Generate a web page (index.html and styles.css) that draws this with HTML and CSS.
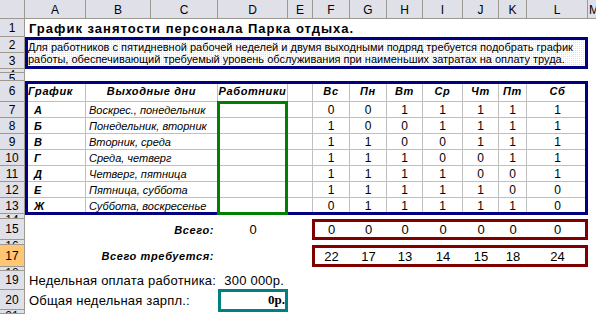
FILE: index.html
```html
<!DOCTYPE html>
<html lang="ru">
<head>
<meta charset="utf-8">
<title>График занятости</title>
<link rel="stylesheet" href="styles.css">
</head>
<body>
<div class="sheet">
  <div class="layer cells">
    <!-- column headers -->
    <div class="ch"></div>
    <div class="ch">A</div><div class="ch">B</div><div class="ch">C</div><div class="ch">D</div><div class="ch">E</div><div class="ch">F</div><div class="ch">G</div><div class="ch">H</div><div class="ch">I</div><div class="ch">J</div><div class="ch">K</div><div class="ch">L</div><div class="ch ch-m">M</div>

    <!-- row 1 -->
    <div class="rh">1</div><div class="c s13 title">График занятости персонала Парка отдыха.</div>

    <!-- rows 2-3 -->
    <div class="rh">2</div>
    <div class="note s12 rs2"><span>Для работников с пятидневной рабочей неделей и двумя выходными подряд требуется подобрать график</span><span>работы, обеспечивающий требуемый уровень обслуживания при наименьших затратах на оплату труда.</span></div>
    <div class="c"></div>
    <div class="rh">3</div><div class="c"></div>

    <!-- rows 4-5 -->
    <div class="rh tiny"><span class="clip">4</span></div><div class="c s13"></div>
    <div class="rh tiny"><span class="clip">5</span></div><div class="c s13"></div>

    <!-- row 6 table header -->
    <div class="rh">6</div>
    <div class="t th left">График</div>
    <div class="t th s2">Выходные дни</div>
    <div class="t th">Работники</div>
    <div class="t"></div>
    <div class="t th">Вс</div><div class="t th">Пн</div><div class="t th">Вт</div><div class="t th">Ср</div><div class="t th">Чт</div><div class="t th">Пт</div><div class="t th last">Сб</div>
    <div class="c"></div>

    <!-- row 7 -->
    <div class="rh">7</div>
    <div class="t code">А</div><div class="t days s2">Воскрес., понедельник</div><div class="t"></div><div class="t"></div>
    <div class="t n">0</div><div class="t n">0</div><div class="t n">1</div><div class="t n">1</div><div class="t n">1</div><div class="t n">1</div><div class="t n last">1</div>
    <div class="c"></div>

    <!-- row 8 -->
    <div class="rh">8</div>
    <div class="t code">Б</div><div class="t days s2">Понедельник, вторник</div><div class="t"></div><div class="t"></div>
    <div class="t n">1</div><div class="t n">0</div><div class="t n">0</div><div class="t n">1</div><div class="t n">1</div><div class="t n">1</div><div class="t n last">1</div>
    <div class="c"></div>

    <!-- row 9 -->
    <div class="rh">9</div>
    <div class="t code">В</div><div class="t days s2">Вторник, среда</div><div class="t"></div><div class="t"></div>
    <div class="t n">1</div><div class="t n">1</div><div class="t n">0</div><div class="t n">0</div><div class="t n">1</div><div class="t n">1</div><div class="t n last">1</div>
    <div class="c"></div>

    <!-- row 10 -->
    <div class="rh">10</div>
    <div class="t code">Г</div><div class="t days s2">Среда, четверг</div><div class="t"></div><div class="t"></div>
    <div class="t n">1</div><div class="t n">1</div><div class="t n">1</div><div class="t n">0</div><div class="t n">0</div><div class="t n">1</div><div class="t n last">1</div>
    <div class="c"></div>

    <!-- row 11 -->
    <div class="rh">11</div>
    <div class="t code">Д</div><div class="t days s2">Четверг, пятница</div><div class="t"></div><div class="t"></div>
    <div class="t n">1</div><div class="t n">1</div><div class="t n">1</div><div class="t n">1</div><div class="t n">0</div><div class="t n">0</div><div class="t n last">1</div>
    <div class="c"></div>

    <!-- row 12 -->
    <div class="rh">12</div>
    <div class="t code">Е</div><div class="t days s2">Пятница, суббота</div><div class="t"></div><div class="t"></div>
    <div class="t n">1</div><div class="t n">1</div><div class="t n">1</div><div class="t n">1</div><div class="t n">1</div><div class="t n">0</div><div class="t n last">0</div>
    <div class="c"></div>

    <!-- row 13 -->
    <div class="rh">13</div>
    <div class="t code">Ж</div><div class="t days s2">Суббота, воскресенье</div><div class="t"></div><div class="t"></div>
    <div class="t n">0</div><div class="t n">1</div><div class="t n">1</div><div class="t n">1</div><div class="t n">1</div><div class="t n">1</div><div class="t n last">0</div>
    <div class="c"></div>

    <!-- row 14 -->
    <div class="rh tiny"><span class="clip">14</span></div><div class="c s13"></div>

    <!-- row 15 -->
    <div class="rh">15</div>
    <div class="c s3 label">Всего:</div>
    <div class="c num center">0</div>
    <div class="c"></div>
    <div class="c num center">0</div><div class="c num center">0</div><div class="c num center">0</div><div class="c num center">0</div><div class="c num center">0</div><div class="c num center">0</div><div class="c num center">0</div>
    <div class="c"></div>

    <!-- row 16 -->
    <div class="rh tiny"><span class="clip">16</span></div><div class="c s13"></div>

    <!-- row 17 -->
    <div class="rh sel">17</div>
    <div class="c s3 label">Всего требуется:</div>
    <div class="c"></div>
    <div class="c"></div>
    <div class="c num center">22</div><div class="c num center">17</div><div class="c num center">13</div><div class="c num center">14</div><div class="c num center">15</div><div class="c num center">18</div><div class="c num center">24</div>
    <div class="c"></div>

    <!-- row 18 -->
    <div class="rh tiny"><span class="clip">18</span></div><div class="c s13"></div>

    <!-- row 19 -->
    <div class="rh">19</div>
    <div class="c s3 plain">Недельная оплата работника:</div>
    <div class="c plain right">300 000р.</div>
    <div class="c s9"></div>

    <!-- row 20 -->
    <div class="rh">20</div>
    <div class="c s3 plain">Общая недельная зарпл.:</div>
    <div class="c total right">0р.</div>
    <div class="c s9"></div>

    <!-- row 21 -->
    <div class="rh tiny"><span class="clip">21</span></div><div class="c s13"></div>
  </div>

  <div class="layer overlays">
    <div class="box box-table"></div>
    <div class="box box-green"></div>
    <div class="box box-red box-r15"></div>
    <div class="box box-red box-r17"></div>
    <div class="box box-teal"></div>
  </div>
</div>
</body>
</html>
```

FILE: styles.css
```css
* { box-sizing: border-box; }

html, body {
  margin: 0;
  padding: 0;
  background: #ffffff;
}

body {
  width: 596px;
  height: 314px;
  overflow: hidden;
  font-family: "Liberation Sans", Arial, sans-serif;
  color: #000000;
}

.sheet {
  display: grid;
  width: 596px;
  height: 314px;
}

.layer {
  grid-area: 1 / 1;
  display: grid;
  grid-template-columns: 25px 61px 65px 67px 70px 25px 37px 37px 36px 40px 36px 28px 61px 8px;
  grid-template-rows: 19px 18px 16px 16px 4px 8px 21px repeat(7, 16px) 5px 21px 5px 22px 4px 19px 20px 4px;
}

.overlays { pointer-events: none; }

/* headers */
.ch, .rh {
  background: #e0e0e9;
  border-right: 1px solid #9c9a90;
  border-bottom: 1px solid #9c9a90;
  font-size: 12px;
  display: flex;
  align-items: center;
  justify-content: center;
  overflow: hidden;
  line-height: 12px;
}

.ch { padding-top: 1px; }
.ch-m { justify-content: flex-start; padding-left: 1px; border-right: 0; }

.rh.sel { background: #ffc774; }
.rh.tiny { align-items: flex-start; }
.clip { display: block; height: 100%; overflow: hidden; line-height: 12px; }

/* generic cells */
.c {
  display: flex;
  align-items: center;
  white-space: nowrap;
  min-width: 0;
}

.s2 { grid-column: span 2; }
.s3 { grid-column: span 3; }
.s9 { grid-column: span 9; }
.s12 { grid-column: span 12; }
.s13 { grid-column: span 13; }
.rs2 { grid-row: span 2; }

.title {
  font-weight: bold;
  font-size: 13px;
  letter-spacing: 1px;
  padding-left: 4px;
  padding-top: 1px;
}

.note {
  border: 3px solid #000080;
  background-color: #ffffff;
  background-image: conic-gradient(#ffff00 0 25%, transparent 0);
  background-size: 2px 2px;
  display: flex;
  flex-direction: column;
  justify-content: center;
  font-size: 11px;
  line-height: 12.5px;
  letter-spacing: 0;
  padding-left: 0;
  white-space: nowrap;
  overflow: hidden;
}

/* table */
.t {
  border-right: 1px solid #c0c0c0;
  border-bottom: 1px solid #c0c0c0;
  display: flex;
  align-items: center;
  white-space: nowrap;
  min-width: 0;
  font-size: 11px;
}

.t.last { border-right: 0; }

.th {
  font-weight: bold;
  font-style: italic;
  letter-spacing: 0.6px;
  justify-content: center;
}

.th.left { justify-content: flex-start; padding-left: 3px; }

.code {
  font-weight: bold;
  font-style: italic;
  padding-left: 9px;
}

.days {
  font-style: italic;
  padding-left: 3px;
  letter-spacing: 0;
}

.n {
  justify-content: center;
  font-size: 12px;
}

/* totals area */
.label {
  justify-content: flex-end;
  font-weight: bold;
  font-style: italic;
  font-size: 11px;
  letter-spacing: 0.6px;
  padding-right: 4px;
}

.num { font-size: 13px; }
.center { justify-content: center; }
.right { justify-content: flex-end; padding-right: 4px; }

.plain {
  font-size: 13px;
  padding-left: 4px;
  letter-spacing: 0.2px;
}

.total {
  font-family: "Liberation Serif", "Times New Roman", serif;
  font-weight: bold;
  font-size: 13px;
  padding-right: 3px;
}

/* border overlays */
.box { border-style: solid; border-width: 3px; }

.box-table {
  grid-column: 2 / 14;
  grid-row: 7 / 15;
  border-color: #000080;
  margin-bottom: -1px;
}

.box-green {
  grid-column: 5 / 6;
  grid-row: 8 / 15;
  border-color: #008000;
  margin: -1px 0 -1px -1px;
}

.box-red {
  grid-column: 7 / 14;
  border-color: #800000;
  margin-left: -1px;
}

.box-r15 { grid-row: 16 / 17; }
.box-r17 { grid-row: 18 / 19; }

.box-teal {
  grid-column: 5 / 6;
  grid-row: 21 / 22;
  border-color: #008080;
  margin: -1px 0 -2px 0;
}
```
